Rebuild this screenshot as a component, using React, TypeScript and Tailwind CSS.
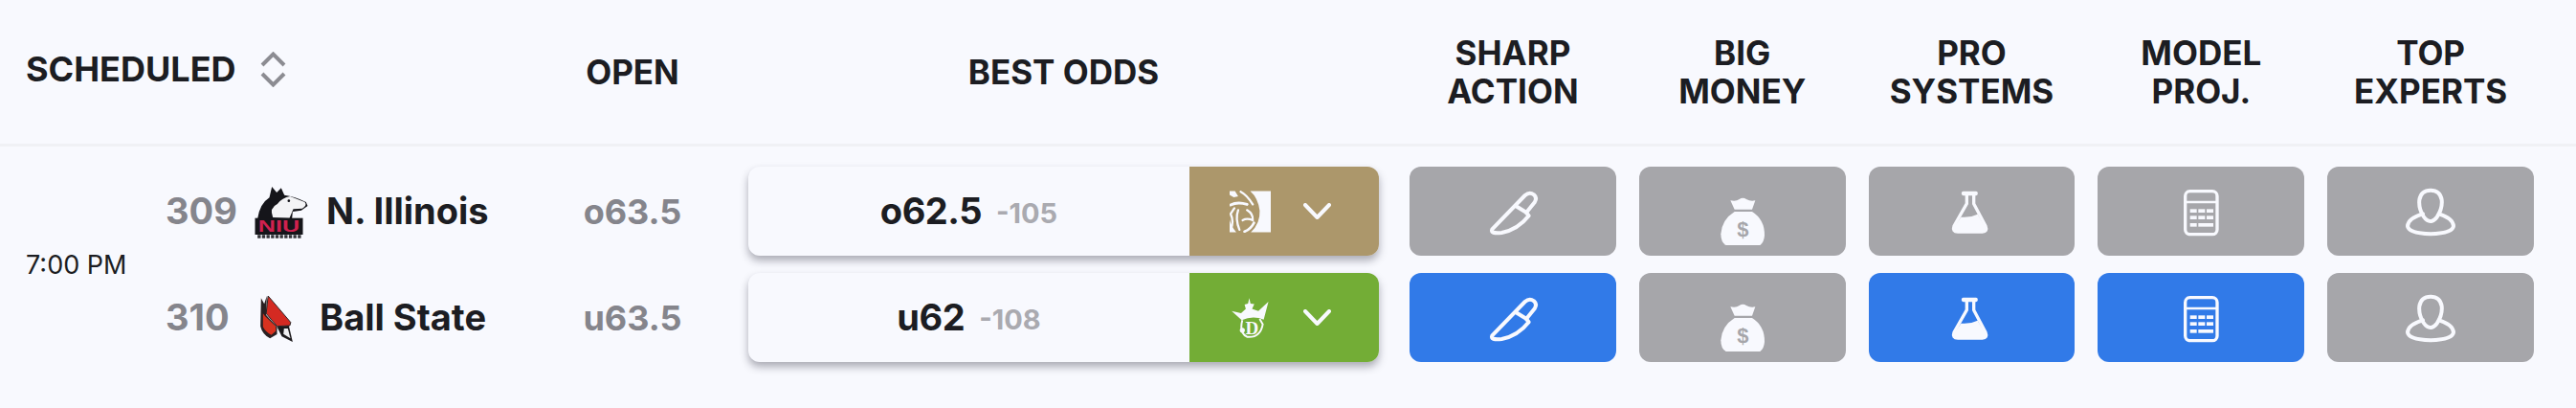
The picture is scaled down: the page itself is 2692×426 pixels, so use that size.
import React from "react";

const INK = "#f8f9fe";

function Knife() {
  return (
    <svg viewBox="0 0 240 210" className="w-[80px] h-[70px]" fill="none" stroke={INK} strokeWidth="12" strokeLinejoin="round" strokeLinecap="round">
      <path d="M55 160 L158 54 Q172 42 186 52 Q197 62 188 76 L162 108 L170 118 Q135 162 85 171 Q48 175 55 160 Z" />
      <path d="M130 88 L163 108" />
    </svg>
  );
}

function Bag({ dollar }: { dollar: string }) {
  return (
    <svg viewBox="0 0 240 210" className="w-[80px] h-[70px] mt-[20px]" fill={INK}>
      <path d="M82 40 Q100 44 110 36 Q121 28 132 36 Q145 44 160 40 L150 68 L95 68 Z" />
      <path d="M95 75 L150 75 Q190 100 189 150 Q187 172 175 180 L68 180 Q52 172 52 145 Q55 100 95 75 Z" />
      <text x="121" y="152" textAnchor="middle" fontSize="66" fontWeight="700" fontFamily="Liberation Sans, sans-serif" fill={dollar}>$</text>
    </svg>
  );
}

function Flask() {
  return (
    <svg viewBox="0 0 240 210" className="w-[80px] h-[70px]" fill="none" stroke={INK} strokeWidth="10" strokeLinejoin="round" strokeLinecap="round">
      <rect x="92" y="44" width="46" height="8" rx="3" fill={INK} strokeWidth="5" />
      <path d="M106 50 L106 80 L66 150 Q60 168 78 168 L155 168 Q172 168 165 150 L128 80 L128 50" />
      <path d="M88 122 Q115 125 140 113 L165 155 Q170 170 155 170 L75 170 Q60 170 65 155 Z" fill={INK} stroke="none" />
    </svg>
  );
}

function Calc() {
  const rows = [97, 118];
  return (
    <svg viewBox="0 0 240 210" className="w-[80px] h-[70px]" fill="none" stroke={INK} strokeWidth="10">
      <rect x="71" y="41" width="100" height="135" rx="15" />
      <path d="M71 75 H171" strokeWidth="7" />
      <g fill={INK} stroke="none">
        {rows.map((y) => (
          <g key={y}>
            <rect x="86" y={y} width="21" height="11" />
            <rect x="112" y={y} width="21" height="11" />
            <rect x="138" y={y} width="21" height="11" />
          </g>
        ))}
        <rect x="86" y="141" width="21" height="11" />
        <rect x="112" y="141" width="47" height="11" />
      </g>
    </svg>
  );
}

function UserIcon() {
  return (
    <svg viewBox="0 0 240 210" className="w-[80px] h-[70px]" fill="none" stroke={INK} strokeWidth="12" strokeLinecap="round">
      <path d="M120 38 Q150 38 155 68 Q158 95 140 122 Q130 135 120 135 Q108 135 98 120 Q82 95 85 68 Q90 38 120 38 Z" />
      <path d="M96 112 Q50 125 48 150 Q50 172 120 175 Q190 172 192 150 Q190 125 146 112" />
    </svg>
  );
}

function Niu() {
  return (
    <svg viewBox="70 30 185 180" className="w-[62px] h-[60px]">
      <path d="M88 142 Q95 95 125 76 L133 42 L148 60 L162 46 L172 68 Q205 72 240 90 L245 102 L225 116 L198 120 L196 142 Z" fill="#15151a" />
      <path d="M136 138 Q124 108 150 96 Q165 76 190 72 L236 90 Q245 100 228 110 L200 112 L188 140 Z" fill="#f4f4f6" />
      <circle cx="186" cy="86" r="4" fill="#15151a" />
      <rect x="80" y="140" width="150" height="52" fill="#15151a" />
      <text x="155" y="183" textAnchor="middle" fontSize="50" fontWeight="700" fontFamily="Liberation Sans, sans-serif" fill="#d0214f" textLength="130" lengthAdjust="spacingAndGlyphs">NIU</text>
      <path d="M88 198 H224" stroke="#333338" strokeWidth="10" strokeDasharray="10 4" />
    </svg>
  );
}

function Ball() {
  return (
    <svg viewBox="80 370 125 165" className="w-[42px] h-[55px]">
      <path d="M122 385 L193 468 L190 478 L150 480 L116 440 Z" fill="#d42a22" stroke="#2a2424" strokeWidth="3" />
      <path d="M100 392 L98 480 Q104 505 128 518 L150 505 L150 482 L116 445 L118 385 L110 410 Z" fill="#2a2022" />
      <path d="M106 440 L106 482 Q114 498 132 507 L146 495 L146 480 L112 448 Z" fill="#d8321f" />
      <path d="M150 482 L187 478 L199 529 L165 512 Z" fill="#1c1a1c" />
      <path d="M172 487 L184 487 L192 518 L170 504 Z" fill="#f0f0f2" />
    </svg>
  );
}

function Mgm() {
  return (
    <svg viewBox="45 28 130 130" className="w-[43px] h-[44px]" fill="none" stroke="#f8f9fe" strokeWidth="7" strokeLinecap="round">
      <path d="M110 28 H175 V158 H112 Q142 130 140 90 Q135 50 110 28 Z" fill="#f8f9fe" stroke="none" />
      <path d="M45 28 H62 L72 45 L58 48 L45 40 Z" fill="#f8f9fe" stroke="none" />
      <path d="M80 30 Q100 40 118 70" />
      <path d="M48 72 Q70 60 100 70" strokeWidth="9" />
      <path d="M60 82 L48 100 Q60 125 48 150" />
      <path d="M72 88 Q62 115 76 150" />
      <path d="M100 88 Q120 100 118 120 Q100 112 86 120" />
      <path d="M122 128 Q112 148 92 156" strokeWidth="8" />
      <path d="M45 118 V158 H66 Q50 140 45 118 Z" fill="#f8f9fe" stroke="none" />
    </svg>
  );
}

function Dk() {
  return (
    <svg viewBox="170 418 124 134" className="w-[41px] h-[44px]">
      <g fill="#f8f9fe">
        <path d="M173 463 L203 470 L218 456 L214 442 L225 439 L229 422 L233 439 L245 441 L238 456 L258 463 L290 433 L275 490 Q240 476 205 492 Z" />
        <text x="238" y="536" textAnchor="middle" fontSize="58" fontWeight="700" fontFamily="Liberation Serif, serif">D</text>
      </g>
      <path d="M207 492 Q196 532 222 545 Q264 549 272 505 L262 488" fill="none" stroke="#f8f9fe" strokeWidth="6" />
      <circle cx="207" cy="524" r="8" fill="#f8f9fe" />
    </svg>
  );
}

function Chevron() {
  return (
    <svg viewBox="0 0 29 17" className="w-[29px] h-[17px]" fill="none" stroke="#f8f9fe" strokeWidth="4" strokeLinecap="round" strokeLinejoin="round">
      <path d="M2 2 L14.5 15 L27 2" />
    </svg>
  );
}

function Sort() {
  return (
    <svg viewBox="0 0 27 37" className="w-[27px] h-[37px]" fill="none" stroke="#8c8c92" strokeWidth="4">
      <path d="M2 14 L13.5 2.5 L25 14" />
      <path d="M2 23 L13.5 34.5 L25 23" />
    </svg>
  );
}

function Head({ a, b }: { a: string; b: string }) {
  return (
    <div className="flex flex-col items-center text-[35px] leading-[40px] font-bold text-[#1c1d22]">
      <span>{a}</span>
      <span>{b}</span>
    </div>
  );
}

function Team({ num, logo, name, logoClass, nameClass }: { num: string; logo: React.ReactNode; name: string; logoClass: string; nameClass: string }) {
  return (
    <div className="h-[93px] flex items-center">
      <span className="w-[90px] text-[38px] font-bold text-[#85858c]">{num}</span>
      <div className={logoClass}>{logo}</div>
      <span className={nameClass}>{name}</span>
    </div>
  );
}

function Odds({ line, price, bg, logo }: { line: string; price: string; bg: string; logo: React.ReactNode }) {
  return (
    <div className="h-[93px] flex rounded-[12px] overflow-hidden shadow-[0_5px_9px_rgba(30,30,45,0.35)]">
      <div className="w-[461px] flex items-center justify-center gap-[15px]">
        <span className="text-[38px] font-bold tracking-[-0.5px] text-[#1c1d22]">{line}</span>
        <span className="text-[29px] font-bold text-[#aaaab0] mt-[4px]">{price}</span>
      </div>
      <div className={`flex-1 flex items-center pl-[42px] gap-[34px] ${bg}`}>
        <div className="w-[43px] flex justify-center">{logo}</div>
        <Chevron />
      </div>
    </div>
  );
}

function Btn({ on, children }: { on: boolean; children: React.ReactNode }) {
  return (
    <div className={`h-[93px] rounded-[12px] flex items-center justify-center ${on ? "bg-[#317ae8]" : "bg-[#a6a6aa]"}`}>
      {children}
    </div>
  );
}

export default function App() {
  const flags = [
    [false, false, false, false, false],
    [true, false, true, true, false],
  ];
  return (
    <div className="w-[2692px] h-[426px] bg-[#f8f9fe] overflow-hidden" style={{ fontFamily: "Inter, 'Liberation Sans', sans-serif" }}>
      <div className="h-[153px] pl-[27px] flex items-center border-b-[3px] border-[#f0f1f5]">
        <div className="w-[558px] flex items-center gap-[25px] -mt-[6px]">
          <span className="text-[36px] font-bold text-[#1c1d22]">SCHEDULED</span>
          <Sort />
        </div>
        <div className="w-[152px] text-center text-[35px] font-bold text-[#1c1d22]">OPEN</div>
        <div className="ml-[45px] w-[659px] text-center text-[35px] font-bold text-[#1c1d22]">BEST ODDS</div>
        <div className="ml-[32px] w-[1175px] grid grid-cols-5 gap-x-[24px]">
          <Head a="SHARP" b="ACTION" />
          <Head a="BIG" b="MONEY" />
          <Head a="PRO" b="SYSTEMS" />
          <Head a="MODEL" b="PROJ." />
          <Head a="TOP" b="EXPERTS" />
        </div>
      </div>
      <div className="pt-[21px] pl-[27px] flex">
        <div className="w-[146px] flex items-center text-[27px] pt-[2px] text-[#1c1d22]">7:00 PM</div>
        <div className="w-[412px] flex flex-col gap-[18px]">
          <Team num="309" logo={<Niu />} name="N. Illinois" logoClass="ml-[0px]" nameClass="ml-[16px] text-[38px] font-bold text-[#1c1d22]" />
          <Team num="310" logo={<Ball />} name="Ball State" logoClass="ml-[3px]" nameClass="ml-[26px] text-[38px] font-bold text-[#1c1d22]" />
        </div>
        <div className="w-[152px] flex flex-col gap-[18px] text-[36px] font-bold text-[#85858c]">
          <div className="h-[93px] flex items-center justify-center">o63.5</div>
          <div className="h-[93px] flex items-center justify-center">u63.5</div>
        </div>
        <div className="ml-[45px] w-[659px] flex flex-col gap-[18px]">
          <Odds line="o62.5" price="-105" bg="bg-[#ac976b]" logo={<Mgm />} />
          <Odds line="u62" price="-108" bg="bg-[#73ad36]" logo={<Dk />} />
        </div>
        <div className="ml-[32px] w-[1175px] grid grid-cols-5 gap-x-[24px] gap-y-[18px]">
          {flags.map((row, i) => (
            <React.Fragment key={i}>
              <Btn on={row[0]}><Knife /></Btn>
              <Btn on={row[1]}><Bag dollar="#a6a6aa" /></Btn>
              <Btn on={row[2]}><Flask /></Btn>
              <Btn on={row[3]}><Calc /></Btn>
              <Btn on={row[4]}><UserIcon /></Btn>
            </React.Fragment>
          ))}
        </div>
      </div>
    </div>
  );
}
